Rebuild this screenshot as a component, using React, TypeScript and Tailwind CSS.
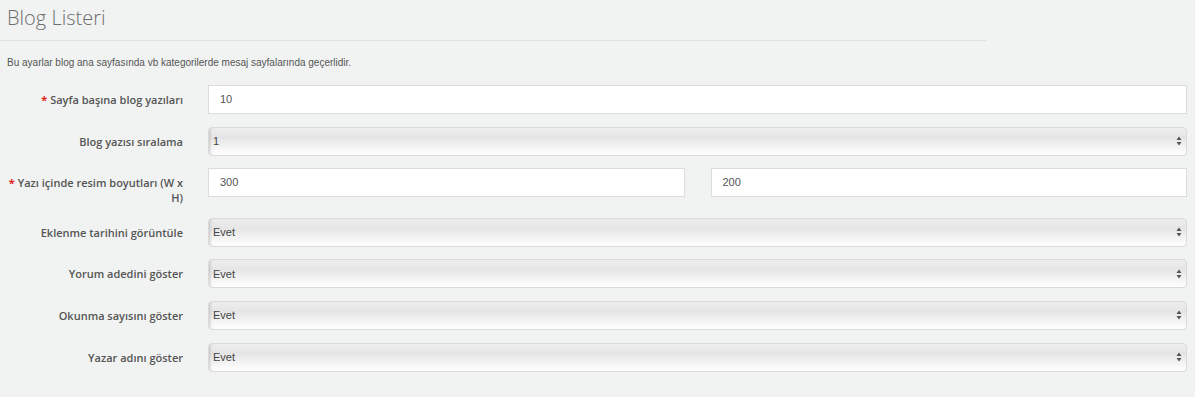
const labelCls =
  "w-[183px] shrink-0 text-right text-[11px] leading-[15px] pt-[7px] font-semibold text-[#555]";

const inputCls =
  "h-[29px] w-full border border-[#dcdcdc] bg-white px-[11px] flex items-center text-[11px] text-[#555]";

const Req = () => <span className="text-[#e02222] font-bold mr-[3px]">*</span>;

const SelectBox = ({ value }: { value: string }) => (
  <div className="relative h-[29px] w-full rounded-[4px] border border-[#dadada] bg-[linear-gradient(to_bottom,#eeeeee_0%,#e5e5e5_35%,#ffffff_100%)] shadow-[inset_3px_0_3px_-2px_rgba(0,0,0,0.18)] flex items-center pl-[4px] text-[11px] text-[#444]">
    {value}
    <svg
      className="absolute right-[4px] top-1/2 -translate-y-1/2"
      width="6"
      height="10"
      viewBox="0 0 6 10"
    >
      <path d="M3 0.5 L5.5 4 L0.5 4 Z" fill="#555" />
      <path d="M3 9.5 L5.5 6 L0.5 6 Z" fill="#555" />
    </svg>
  </div>
);

const Row = ({
  label,
  required,
  children,
}: {
  label: React.ReactNode;
  required?: boolean;
  children: React.ReactNode;
}) => (
  <div className="flex items-start mb-[12.6px]">
    <div className={labelCls}>
      {required && <Req />}
      {label}
    </div>
    <div className="ml-[25px] mr-[8px] flex-1">{children}</div>
  </div>
);

export default function App() {
  return (
    <div
      className="min-h-[397px] w-[1195px] bg-[#f1f3f2] overflow-hidden"
      style={{ fontFamily: "'Open Sans', 'Liberation Sans', sans-serif" }}
    >
      <div className="pt-[4px] pl-[7px] text-[20px] leading-[28px] font-light text-[#6e6e6e]">
        Blog Listeri
      </div>
      <div className="mt-[8px] h-px w-[986px] bg-[#e0e2e1]" />
      <div
        className="mt-[16px] pl-[7px] text-[10px] leading-[12px] text-[#555]"
        style={{ fontFamily: "'Liberation Sans', Arial, sans-serif" }}
      >
        Bu ayarlar blog ana sayfasında vb kategorilerde mesaj sayfalarında geçerlidir.
      </div>

      <div className="mt-[16px]">
        <Row label="Sayfa başına blog yazıları" required>
          <div className={inputCls} style={{ fontFamily: "'Liberation Sans', Arial, sans-serif" }}>
            10
          </div>
        </Row>
        <Row label="Blog yazısı sıralama">
          <div style={{ fontFamily: "'Liberation Sans', Arial, sans-serif" }}>
            <SelectBox value="1" />
          </div>
        </Row>
        <Row
          label={
            <>
              Yazı içinde resim boyutları (W x
              <br />
              H)
            </>
          }
          required
        >
          <div
            className="grid grid-cols-2 gap-[26px]"
            style={{ fontFamily: "'Liberation Sans', Arial, sans-serif" }}
          >
            <div className={inputCls}>300</div>
            <div className={inputCls}>200</div>
          </div>
        </Row>
        {[
          "Eklenme tarihini görüntüle",
          "Yorum adedini göster",
          "Okunma sayısını göster",
          "Yazar adını göster",
        ].map((l) => (
          <Row key={l} label={l}>
            <div style={{ fontFamily: "'Liberation Sans', Arial, sans-serif" }}>
              <SelectBox value="Evet" />
            </div>
          </Row>
        ))}
      </div>
    </div>
  );
}
